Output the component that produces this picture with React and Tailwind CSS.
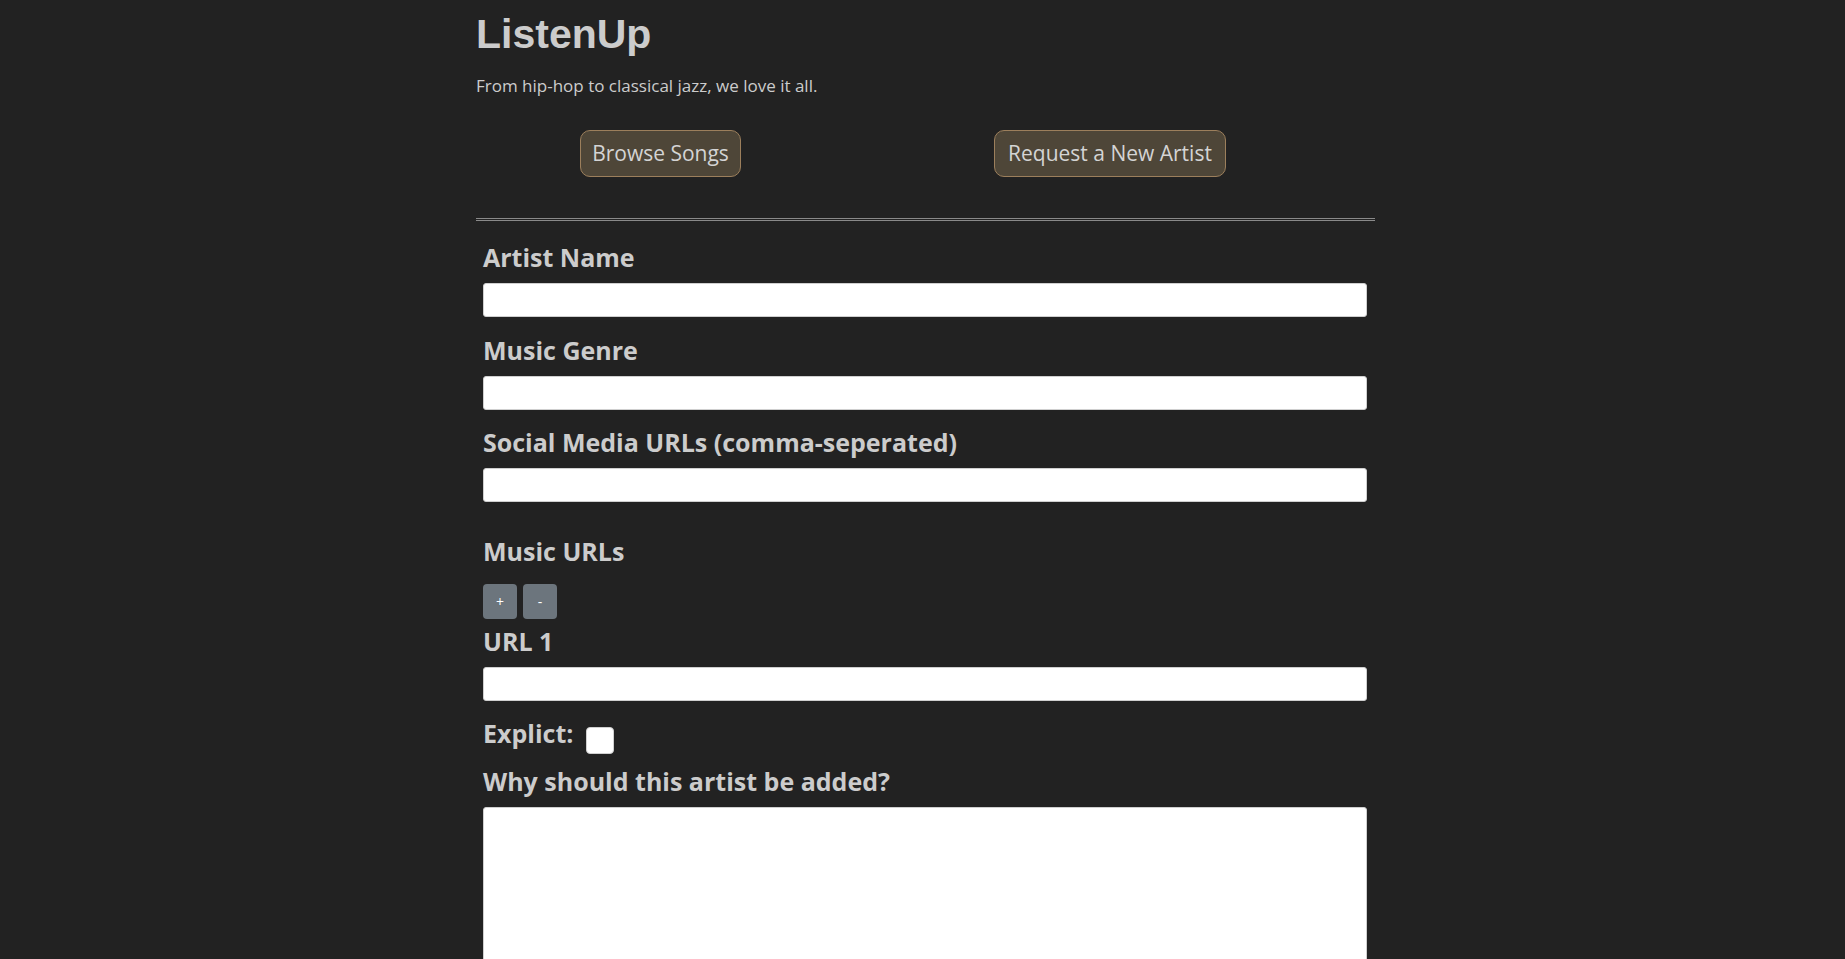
import { useState } from "react";

const labelCls =
  "block text-[25px] leading-[32px] font-bold text-[#cccccc] font-['Open_Sans',sans-serif]";
const inputCls =
  "block w-full h-[34px] mt-[10px] bg-white border border-[#cfcfcf] rounded-[3px] px-2 text-black outline-none";

export default function App() {
  const [urls, setUrls] = useState([""]);

  return (
    <div className="min-h-screen bg-[#222222] flex justify-center pl-[6px] font-['Open_Sans',sans-serif]">
      <div className="w-[899px]">
        {/* HEADER */}
        <h1 className="pt-[10px] text-[41px] leading-[48px] font-bold text-[#cccccc] font-['Liberation_Sans',Arial,sans-serif]">
          ListenUp
        </h1>
        <p className="mt-[17px] text-[17px] leading-[22px] text-[#cccccc]">
          From hip-hop to classical jazz, we love it all.
        </p>

        <nav className="mt-[33px] flex pl-[104px] gap-[253px]">
          <NavButton className="w-[161px]">Browse Songs</NavButton>
          <NavButton className="w-[232px]">Request a New Artist</NavButton>
        </nav>

        <hr className="mt-[41px] h-[3px] border-0 border-y border-y-[#8a8a8a]" />

        {/* FORM */}
        <form className="pl-[7px] pr-[8px] pt-[20px] pb-10" onSubmit={(e) => e.preventDefault()}>
          <label className={labelCls}>Artist Name</label>
          <input type="text" className={inputCls} />

          <label className={labelCls + " mt-[17px]"}>Music Genre</label>
          <input type="text" className={inputCls} />

          <label className={labelCls + " mt-[16px]"}>
            Social Media URLs (comma-seperated)
          </label>
          <input type="text" className={inputCls} />

          <label className={labelCls + " mt-[33px]"}>Music URLs</label>
          <div className="mt-[17px] flex gap-[6px]">
            <SmallButton onClick={() => setUrls([...urls, ""])}>+</SmallButton>
            <SmallButton onClick={() => urls.length > 1 && setUrls(urls.slice(0, -1))}>
              -
            </SmallButton>
          </div>
          {urls.map((u, i) => (
            <div key={i} className={i === 0 ? "mt-[6px]" : "mt-[16px]"}>
              <label className={labelCls}>URL {i + 1}</label>
              <input type="text" className={inputCls} />
            </div>
          ))}

          <div className="mt-[16px] flex items-start">
            <label className={labelCls}>Explict:</label>
            <input
              type="checkbox"
              className="appearance-none mt-[10px] ml-[13px] w-[28px] h-[27px] bg-white rounded-[4px] border border-[#d0d0d0]"
            />
          </div>

          <label className={labelCls + " mt-[11px]"}>Why should this artist be added?</label>
          <textarea className="block w-full h-[220px] mt-[10px] bg-white border border-[#cfcfcf] rounded-[3px] p-2 text-black outline-none" />
        </form>
      </div>
    </div>
  );
}

/* ================= UI COMPONENTS ================= */

function NavButton({ children, className = "" }) {
  return (
    <button
      className={
        "h-[47px] shrink-0 whitespace-nowrap rounded-[10px] bg-[#4e4638] border border-[#9c7f5c] text-[#d4d4d4] text-[21px] font-['Open_Sans',sans-serif] flex items-center justify-center " +
        className
      }
    >
      {children}
    </button>
  );
}

function SmallButton({ children, onClick }) {
  return (
    <button
      type="button"
      onClick={onClick}
      className="w-[34px] h-[35px] rounded-[4px] bg-[#6c757d] text-white text-[14px] leading-none flex items-center justify-center font-['Open_Sans',sans-serif]"
    >
      {children}
    </button>
  );
}
